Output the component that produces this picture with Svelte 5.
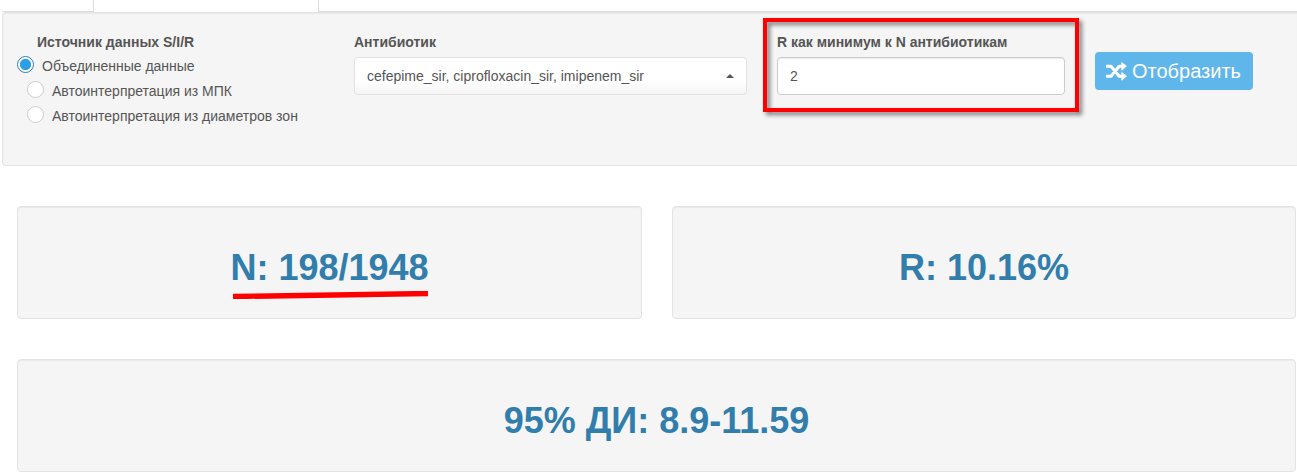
<script>
  let source = $state('all');
  let minimum = $state('2');
  const sources = [
    { id: 'all', label: 'Объединенные данные' },
    { id: 'mic', label: 'Автоинтерпретация из МПК' },
    { id: 'zone', label: 'Автоинтерпретация из диаметров зон' }
  ];
</script>

<main>
  <nav class="tabs">
    <span class="tab first"></span>
    <span class="tab active"></span>
    <span class="rest"></span>
  </nav>

  <section class="well filters">
    <div class="sources">
      <h2>Источник данных S/I/R</h2>
      {#each sources as item, i}
        <label class="radio" class:indent={i > 0}>
          <input type="radio" name="source" value={item.id} bind:group={source} />
          <span>{item.label}</span>
        </label>
      {/each}
    </div>

    <div class="field drug">
      <h2>Антибиотик</h2>
      <button class="select">
        <span>cefepime_sir, ciprofloxacin_sir, imipenem_sir</span>
        <i class="caret"></i>
      </button>
    </div>

    <div class="field count">
      <h2>R как минимум к N антибиотикам</h2>
      <input class="number" type="text" bind:value={minimum} />
      <div class="frame"></div>
    </div>

    <button class="show">
      <svg viewBox="0 0 21 19" width="21" height="19">
        <path d="M0 4.2H5L13.2 14.2H16.5M0 14.2H5L13.2 4.2H16.5" fill="none" stroke="#fff" stroke-width="3.1" stroke-linejoin="round" />
        <path d="M15.3 .4Q15.3-.2 16 .2L20.5 3.8Q21 4.2 20.5 4.6L16 8.4Q15.3 8.8 15.3 8.1ZM15.3 10.4Q15.3 9.8 16 10.2L20.5 13.8Q21 14.2 20.5 14.6L16 18.4Q15.3 18.8 15.3 18.1Z" fill="#fff" />
      </svg>
      <span>Отобразить</span>
    </button>
  </section>

  <div class="results">
    <section class="well card">
      <h1>N: 198/1948
        <svg class="mark" viewBox="0 0 197 8" width="197" height="8">
          <path d="M1 5.5L196 2.5" stroke="#f00" stroke-width="5.4" />
        </svg>
      </h1>
    </section>
    <section class="well card"><h1>R: 10.16%</h1></section>
    <section class="well card wide"><h1>95% ДИ: 8.9-11.59</h1></section>
  </div>
</main>

<style>
  :global(body) { background: #fff; overflow: hidden; }
  main {
    font: 14px/20px "Liberation Sans", Arial, sans-serif;
    color: #555;
    width: 1297px;
    height: 474px;
    overflow: hidden;
  }
  main, main * { box-sizing: border-box; }
  .tabs { display: flex; height: 12px; padding-left: 2px; }
  .first { width: 91px; border-bottom: 1px solid #ddd; }
  .active { width: 226px; border: solid #ddd; border-width: 0 1px; }
  .rest { flex: 1; border-bottom: 1px solid #ddd; }
  .well {
    background: #f5f5f5;
    border: 1px solid #e3e3e3;
    border-radius: 4px;
    box-shadow: inset 0 1px 1px rgba(0, 0, 0, 0.05);
  }
  .filters {
    display: flex;
    align-items: flex-start;
    height: 154px;
    margin-left: 2px;
    padding: 19px 0 0 14px;
    border-right: 0;
    border-radius: 4px 0 0 4px;
  }
  h2 { margin: 0 0 5px; font-size: 14px; line-height: 20px; font-weight: bold; }
  .sources { width: 337px; }
  .sources h2 { margin: 0 0 2px 20px; }
  .radio { display: flex; align-items: flex-start; gap: 8px; height: 25px; padding-top: 2px; }
  .radio.indent { margin-left: 10px; }
  .radio input {
    appearance: none;
    width: 17px;
    height: 17px;
    margin: 0;
    border: 1px solid #ccc;
    border-radius: 50%;
    background: #fff;
  }
  .radio input:checked {
    border-color: #337ab7;
    background: radial-gradient(circle, #2a9fe6 5.2px, #fff 6px);
  }
  .field { position: relative; }
  .drug { width: 393px; margin-right: 30px; }
  .count { width: 288px; margin-right: 30px; }
  .select {
    display: flex;
    align-items: center;
    justify-content: space-between;
    width: 100%;
    height: 38px;
    padding: 0 12px;
    border: 1px solid #e2e2e2;
    border-radius: 4px;
    background: linear-gradient(#fff 0%, #fff 60%, #f5f5f5 100%);
    color: #555;
    font: inherit;
  }
  .caret { border: 4px solid transparent; border-top: 0; border-bottom-color: #555; }
  .number {
    display: block;
    width: 100%;
    height: 38px;
    padding: 0 12px;
    border: 1px solid #ccc;
    border-radius: 4px;
    background: #fff;
    box-shadow: inset 0 1px 1px rgba(0, 0, 0, 0.075);
    color: #555;
    font: inherit;
  }
  .frame {
    position: absolute;
    left: -14px;
    top: -14px;
    width: 316px;
    height: 94px;
    border: 4px solid #f00;
    filter: drop-shadow(3px 3px 2px rgba(0, 0, 0, 0.5));
    pointer-events: none;
  }
  .show {
    display: flex;
    align-items: center;
    gap: 5px;
    width: 158px;
    height: 38px;
    margin-top: 20px;
    padding: 0 0 0 11px;
    border: 0;
    border-radius: 4px;
    background: #5eb6ea;
    color: #fff;
    font: 20px/28px "Liberation Sans", Arial, sans-serif;
  }
  .results {
    display: grid;
    grid-template-columns: 625px 624px;
    gap: 40px 30px;
    padding: 40px 0 0 17px;
  }
  .card { height: 113px; padding-top: 41px; }
  .wide { grid-column: 1 / 3; }
  h1 {
    position: relative;
    width: fit-content;
    margin: 0 auto;
    color: #317eac;
    font-size: 36px;
    line-height: 40px;
    font-weight: bold;
    white-space: nowrap;
  }
  .mark { position: absolute; left: 2px; bottom: -11px; }
</style>
